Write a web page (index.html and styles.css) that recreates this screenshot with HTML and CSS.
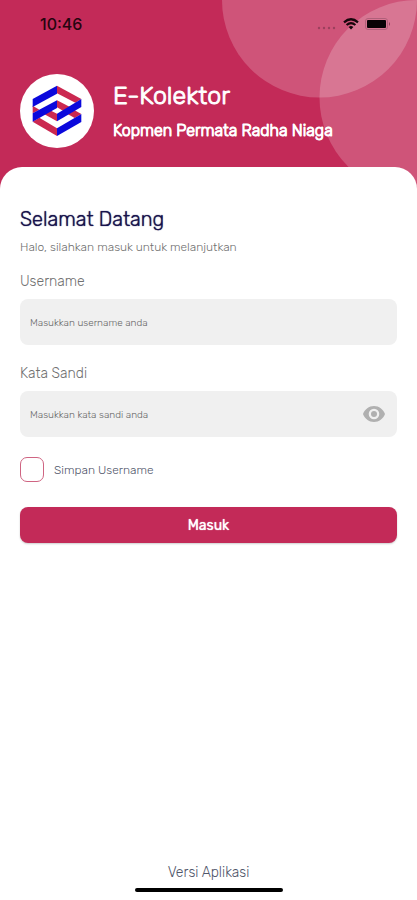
FILE: index.html
```html
<!DOCTYPE html>
<html lang="id">
<head>
<meta charset="utf-8">
<meta name="viewport" content="width=device-width, initial-scale=1">
<title>E-Kolektor</title>
<link rel="stylesheet" href="styles.css">
</head>
<body>
<div class="app">
  <header class="header">
    <svg class="circles" viewBox="0 0 196 196" aria-hidden="true">
      <circle cx="98" cy="0" r="98"/>
      <circle cx="196" cy="98" r="98"/>
    </svg>
    <div class="status">
      <time class="clock">10:46</time>
      <div class="indicators">
        <svg width="20" height="4" viewBox="0 0 20 4" fill="#9c405e" aria-hidden="true">
          <circle cx="2" cy="2" r="1.2"/><circle cx="7" cy="2" r="1.2"/><circle cx="12" cy="2" r="1.2"/><circle cx="17" cy="2" r="1.2"/>
        </svg>
        <svg class="wifi" width="16" height="12" viewBox="0 0 16 12" aria-hidden="true">
          <g fill="none" stroke="#16060b" stroke-width="2.2">
            <path d="M1 4.3Q8-1.8 15 4.3"/>
            <path d="M3.6 7Q8 3.2 12.4 7"/>
          </g>
          <path fill="#16060b" d="M5.6 9Q8 7 10.4 9L8 11.6z"/>
        </svg>
        <svg width="26" height="12" viewBox="0 0 26 12" aria-hidden="true">
          <rect x=".5" y=".5" width="22" height="11" rx="2.5" fill="none" stroke="#b0607a"/>
          <rect x="2" y="2" width="19" height="8" rx="1" fill="#080205"/>
          <path d="M24 4q2 2 0 4z" fill="#8e4059"/>
        </svg>
      </div>
    </div>
    <div class="brand">
      <div class="logo">
        <svg width="50" height="52" viewBox="53 55 150 156" aria-hidden="true">
          <g fill="#cb2850">
            <path d="M128 57 201 97 183 108 128 80z"/>
            <path d="M55 117 75 129 55 140z"/>
            <path d="M128 101 167 121 146 132 128 122z"/>
            <path d="M110 132 128 141V164L89 142z"/>
            <path d="M181 131 201 142 181 154 161 143z"/>
            <path d="M55 165 75 153 128 185V208z"/>
          </g>
          <g fill="#0b08dc">
            <path d="M55 97 128 57V81L55 121z"/>
            <path d="M201 97V121L128 164V141z"/>
            <path d="M55 140 128 101V124L55 165z"/>
            <path d="M201 142V166L128 208V185z"/>
          </g>
        </svg>
      </div>
      <div class="brand-text">
        <h1>E-Kolektor</h1>
        <p>Kopmen Permata Radha Niaga</p>
      </div>
    </div>
  </header>
  <main class="sheet">
    <h2>Selamat Datang</h2>
    <p class="intro">Halo, silahkan masuk untuk melanjutkan</p>
    <form class="form">
      <label class="label" for="username">Username</label>
      <div class="field">
        <input id="username" type="text" placeholder="Masukkan username anda">
      </div>
      <label class="label" for="password">Kata Sandi</label>
      <div class="field">
        <input id="password" type="password" placeholder="Masukkan kata sandi anda">
        <button class="eye" type="button" aria-label="Tampilkan kata sandi">
          <svg width="24" height="24" viewBox="0 0 24 24" fill="#b0b0b0" aria-hidden="true">
            <path d="M12 4C7 4 2.700 7.300 1 12c1.700 4.700 6 8 11 8s9.300-3.300 11-8c-1.700-4.700-6-8-11-8zm0 13.300a5.300 5.300 0 1 1 0-10.600 5.300 5.300 0 0 1 0 10.600zm0-8.300a3 3 0 1 0 0 6 3 3 0 0 0 0-6z"/>
          </svg>
        </button>
      </div>
      <label class="remember"><input type="checkbox">Simpan Username</label>
      <button class="submit" type="submit">Masuk</button>
    </form>
  </main>
  <footer class="footer">
    <span>Versi Aplikasi</span>
    <div class="home-bar"></div>
  </footer>
</div>
</body>
</html>
```
FILE: styles.css
```css
* {
  box-sizing: border-box;
}

body {
  margin: 0;
  background: #fff;
  font-family: Rubik, Roboto, sans-serif;
  font-weight: 300;
}

h1, h2, p {
  margin: 0;
  font-weight: 300;
}

.app {
  display: flex;
  flex-direction: column;
  min-height: 100vh;
}

.header {
  position: relative;
  overflow: hidden;
  padding: 14px 20px 41px;
  background: #c32a58;
}

.circles {
  position: absolute;
  top: 0;
  right: 0;
  width: 195px;
  height: 195px;
  fill: #fff;
  fill-opacity: 0.2;
}

.status {
  position: relative;
  display: flex;
  align-items: center;
  justify-content: space-between;
  height: 20px;
  padding: 0 6px 0 20px;
}

.clock {
  color: #26050f;
  font-family: Inter, sans-serif;
  font-size: 16px;
  font-weight: 500;
}

.indicators {
  display: flex;
  align-items: center;
  gap: 6px;
}

.indicators svg:first-child {
  margin-top: 8px;
}

.brand {
  position: relative;
  display: flex;
  align-items: center;
  gap: 19px;
  margin-top: 40px;
}

.logo {
  display: grid;
  place-items: center;
  width: 74px;
  height: 74px;
  border-radius: 50%;
  background: #fff;
}

.brand-text {
  color: #fff;
  -webkit-text-stroke: 1px #fff;
}

h1 {
  font-size: 25px;
  line-height: 32px;
}

.brand-text p {
  margin-top: 8px;
  font-size: 16px;
  line-height: 22px;
}

.sheet {
  position: relative;
  flex: 1;
  margin-top: -22px;
  padding: 40px 20px 20px;
  border-radius: 22px 22px 0 0;
  background: #fff;
}

h2 {
  color: #17124c;
  font-size: 20px;
  line-height: 24px;
  text-shadow: 0 0 1px #17124c;
}

.intro {
  margin-top: 8px;
  color: #707070;
  font-size: 12px;
  line-height: 16px;
}

.form {
  display: flex;
  flex-direction: column;
  margin-top: 16px;
}

.label {
  color: #707070;
  font-size: 14px;
  line-height: 22px;
}

.field {
  position: relative;
  margin: 6px 0 18px;
}

.field input {
  display: block;
  width: 100%;
  height: 46px;
  padding: 2px 50px 0 10px;
  border: 0;
  border-radius: 8px;
  background: #f0f0f0;
  color: #444;
  font-family: inherit;
  font-size: 10px;
  font-weight: 300;
}

.field input::placeholder {
  color: #666;
  opacity: 1;
}

.eye {
  position: absolute;
  top: 11px;
  right: 11px;
  display: block;
  padding: 0;
  border: 0;
  background: none;
}

.eye svg {
  display: block;
}

.remember {
  display: flex;
  align-items: center;
  gap: 10px;
  margin-top: 2px;
  color: #50566a;
  font-size: 12px;
  line-height: 24px;
}

.remember input {
  appearance: none;
  width: 24px;
  height: 25px;
  margin: 0;
  border: 1px solid #cf6482;
  border-radius: 7px;
  background: #fff;
}

.remember input:checked {
  background: #c32a58;
}

.submit {
  height: 36px;
  margin-top: 25px;
  border: 0;
  border-radius: 8px;
  background: #c32a58;
  box-shadow: 0 1px 2px #0003;
  color: #fff;
  font-family: inherit;
  font-size: 14px;
  font-weight: 400;
  text-shadow: 0 0 1px #fff;
}

.footer {
  display: flex;
  flex-direction: column;
  align-items: center;
  gap: 5px;
  padding-bottom: 8px;
  color: #50566a;
  font-size: 14px;
  line-height: 20px;
}

.home-bar {
  width: 148px;
  height: 4px;
  border-radius: 2px;
  background: #000;
}
```
